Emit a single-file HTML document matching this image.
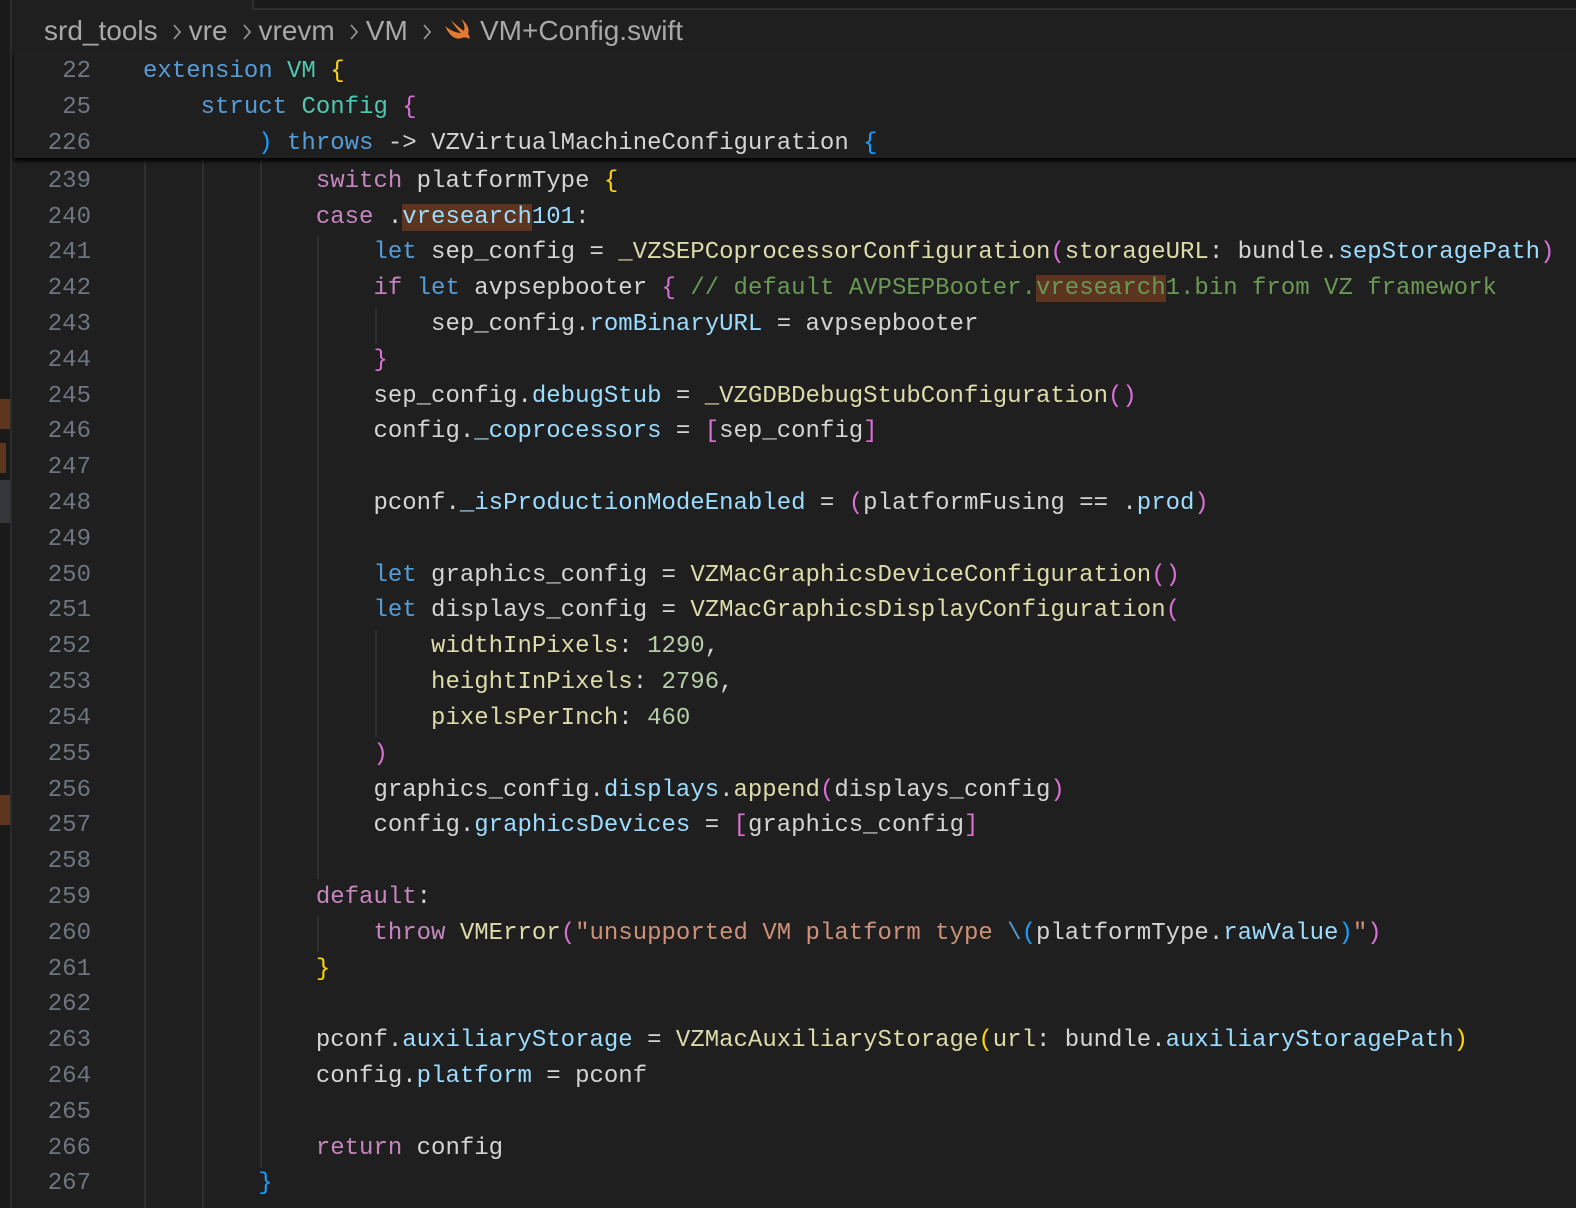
<!DOCTYPE html>
<html><head><meta charset="utf-8">
<style>
html,body{margin:0;padding:0;}
body{width:1576px;height:1208px;background:#1f1f1f;position:relative;overflow:hidden;font-family:"Liberation Mono","DejaVu Sans Mono",monospace;}
.strip{position:absolute;left:0;top:0;width:10px;height:1208px;background:#1a1a1a;border-right:2px solid #2b2b2b;}
.mk{position:absolute;left:0;width:10px;}
.topbox{position:absolute;left:252px;top:-2px;width:1330px;height:8px;border:2px solid #2e2e2e;background:#1a1a1a;}
.bc{position:absolute;left:44px;top:14px;height:36px;font-family:"Liberation Sans",sans-serif;font-size:28px;line-height:34px;color:#a8a8a8;white-space:pre;}
.bc svg.ch{display:inline-block;vertical-align:-1px;margin:0 8px 0 15px;}
.ln{position:absolute;left:0;width:1576px;height:36px;line-height:36px;font-size:24px;white-space:pre;color:#d4d4d4;}
.ln .no{position:absolute;left:0;width:91px;text-align:right;color:#6e7681;}
.ln .code{position:absolute;left:143px;}
.sticky{position:absolute;left:14px;top:50px;width:1576px;height:108px;background:#1f1f1f;box-shadow:0 3px 4px #000;z-index:3;}
.g{position:absolute;width:2px;background:#2f2f2f;}
.k{color:#569cd6}.c{color:#c586c0}.t{color:#4ec9b0}.f{color:#dcdcaa}.p{color:#9cdcfe}.s{color:#ce9178}.m{color:#6a9955}.n{color:#b5cea8}.y{color:#ffd700}.v{color:#da70d6}.b{color:#179fff}
.hl{background:#5c3420;}
</style></head><body>
<div class="strip"></div>
<div class="mk" style="top:399px;height:30px;background:#5e361e"></div>
<div class="mk" style="top:443px;width:6px;height:30px;background:#5e361e"></div>
<div class="mk" style="top:480px;height:43px;background:#36363d"></div>
<div class="mk" style="top:795px;height:30px;background:#5e361e"></div>
<div class="topbox"></div>
<div class="bc">srd_tools<svg class="ch" width="8" height="18" viewBox="0 0 8 18"><path d="M1 2 L7 9 L1 16" stroke="#9a9a9a" stroke-width="1.6" fill="none"/></svg>vre<svg class="ch" width="8" height="18" viewBox="0 0 8 18"><path d="M1 2 L7 9 L1 16" stroke="#9a9a9a" stroke-width="1.6" fill="none"/></svg>vrevm<svg class="ch" width="8" height="18" viewBox="0 0 8 18"><path d="M1 2 L7 9 L1 16" stroke="#9a9a9a" stroke-width="1.6" fill="none"/></svg>VM<svg class="ch" width="8" height="18" viewBox="0 0 8 18"><path d="M1 2 L7 9 L1 16" stroke="#9a9a9a" stroke-width="1.6" fill="none"/></svg></div>
<svg style="position:absolute;left:443px;top:17px" width="28" height="24" viewBox="0 0 28 24"><path d="M2 9 C8 14 14 16 18 16 C14 12 10 7 8 3 C13 8 18 12 21 14 C22 10 21 6 18 2 C24 6 27 12 25 17 C27 19 27 21 26 22 C24 20 22 20 19 21 C13 23 7 20 2 9 Z" fill="#e37933"/></svg>
<div class="bc" style="left:480px">VM+Config.swift</div>

<div class="sticky">
<div class="ln" style="top:4px;left:-14px"><span class="no">22</span><span class="code"><span class="k">extension</span> <span class="t">VM</span> <span class="y">{</span></span></div>
<div class="ln" style="top:40px;left:-14px"><span class="no">25</span><span class="code">    <span class="k">struct</span> <span class="t">Config</span> <span class="v">{</span></span></div>
<div class="ln" style="top:76px;left:-14px"><span class="no">226</span><span class="code">        <span class="b">)</span> <span class="k">throws</span> -&gt; VZVirtualMachineConfiguration <span class="b">{</span></span></div>
</div>

<div class="g" style="left:144px;top:160px;height:1048px"></div>
<div class="g" style="left:202px;top:160px;height:1048px"></div>
<div class="g" style="left:260px;top:160px;height:1008px"></div>
<div class="g" style="left:317px;top:236px;height:643px"></div>
<div class="g" style="left:317px;top:916px;height:36px"></div>
<div class="g" style="left:375px;top:308px;height:36px"></div>
<div class="g" style="left:375px;top:630px;height:107px"></div>

<div class="ln" style="top:164px"><span class="no">239</span><span class="code">            <span class="c">switch</span> platformType <span class="y">{</span></span></div>
<div class="ln" style="top:200px"><span class="no">240</span><span class="code">            <span class="c">case</span> .<span class="p"><span class="hl">vresearch</span>101</span>:</span></div>
<div class="ln" style="top:235px"><span class="no">241</span><span class="code">                <span class="k">let</span> sep_config = <span class="f">_VZSEPCoprocessorConfiguration</span><span class="v">(</span><span class="f">storageURL</span>: bundle.<span class="p">sepStoragePath</span><span class="v">)</span></span></div>
<div class="ln" style="top:271px"><span class="no">242</span><span class="code">                <span class="c">if</span> <span class="k">let</span> avpsepbooter <span class="v">{</span> <span class="m">// default AVPSEPBooter.<span class="hl">vresearch</span>1.bin from VZ framework</span></span></div>
<div class="ln" style="top:307px"><span class="no">243</span><span class="code">                    sep_config.<span class="p">romBinaryURL</span> = avpsepbooter</span></div>
<div class="ln" style="top:343px"><span class="no">244</span><span class="code">                <span class="v">}</span></span></div>
<div class="ln" style="top:379px"><span class="no">245</span><span class="code">                sep_config.<span class="p">debugStub</span> = <span class="f">_VZGDBDebugStubConfiguration</span><span class="v">()</span></span></div>
<div class="ln" style="top:414px"><span class="no">246</span><span class="code">                config.<span class="p">_coprocessors</span> = <span class="v">[</span>sep_config<span class="v">]</span></span></div>
<div class="ln" style="top:450px"><span class="no">247</span><span class="code"></span></div>
<div class="ln" style="top:486px"><span class="no">248</span><span class="code">                pconf.<span class="p">_isProductionModeEnabled</span> = <span class="v">(</span>platformFusing == .<span class="p">prod</span><span class="v">)</span></span></div>
<div class="ln" style="top:522px"><span class="no">249</span><span class="code"></span></div>
<div class="ln" style="top:558px"><span class="no">250</span><span class="code">                <span class="k">let</span> graphics_config = <span class="f">VZMacGraphicsDeviceConfiguration</span><span class="v">()</span></span></div>
<div class="ln" style="top:593px"><span class="no">251</span><span class="code">                <span class="k">let</span> displays_config = <span class="f">VZMacGraphicsDisplayConfiguration</span><span class="v">(</span></span></div>
<div class="ln" style="top:629px"><span class="no">252</span><span class="code">                    <span class="f">widthInPixels</span>: <span class="n">1290</span>,</span></div>
<div class="ln" style="top:665px"><span class="no">253</span><span class="code">                    <span class="f">heightInPixels</span>: <span class="n">2796</span>,</span></div>
<div class="ln" style="top:701px"><span class="no">254</span><span class="code">                    <span class="f">pixelsPerInch</span>: <span class="n">460</span></span></div>
<div class="ln" style="top:737px"><span class="no">255</span><span class="code">                <span class="v">)</span></span></div>
<div class="ln" style="top:773px"><span class="no">256</span><span class="code">                graphics_config.<span class="p">displays</span>.<span class="f">append</span><span class="v">(</span>displays_config<span class="v">)</span></span></div>
<div class="ln" style="top:808px"><span class="no">257</span><span class="code">                config.<span class="p">graphicsDevices</span> = <span class="v">[</span>graphics_config<span class="v">]</span></span></div>
<div class="ln" style="top:844px"><span class="no">258</span><span class="code"></span></div>
<div class="ln" style="top:880px"><span class="no">259</span><span class="code">            <span class="c">default</span>:</span></div>
<div class="ln" style="top:916px"><span class="no">260</span><span class="code">                <span class="c">throw</span> <span class="f">VMError</span><span class="v">(</span><span class="s">"unsupported VM platform type </span><span class="k">\</span><span class="b">(</span>platformType.<span class="p">rawValue</span><span class="b">)</span><span class="s">"</span><span class="v">)</span></span></div>
<div class="ln" style="top:952px"><span class="no">261</span><span class="code">            <span class="y">}</span></span></div>
<div class="ln" style="top:987px"><span class="no">262</span><span class="code"></span></div>
<div class="ln" style="top:1023px"><span class="no">263</span><span class="code">            pconf.<span class="p">auxiliaryStorage</span> = <span class="f">VZMacAuxiliaryStorage</span><span class="y">(</span><span class="f">url</span>: bundle.<span class="p">auxiliaryStoragePath</span><span class="y">)</span></span></div>
<div class="ln" style="top:1059px"><span class="no">264</span><span class="code">            config.<span class="p">platform</span> = pconf</span></div>
<div class="ln" style="top:1095px"><span class="no">265</span><span class="code"></span></div>
<div class="ln" style="top:1131px"><span class="no">266</span><span class="code">            <span class="c">return</span> config</span></div>
<div class="ln" style="top:1166px"><span class="no">267</span><span class="code">        <span class="b">}</span></span></div>
</body></html>
